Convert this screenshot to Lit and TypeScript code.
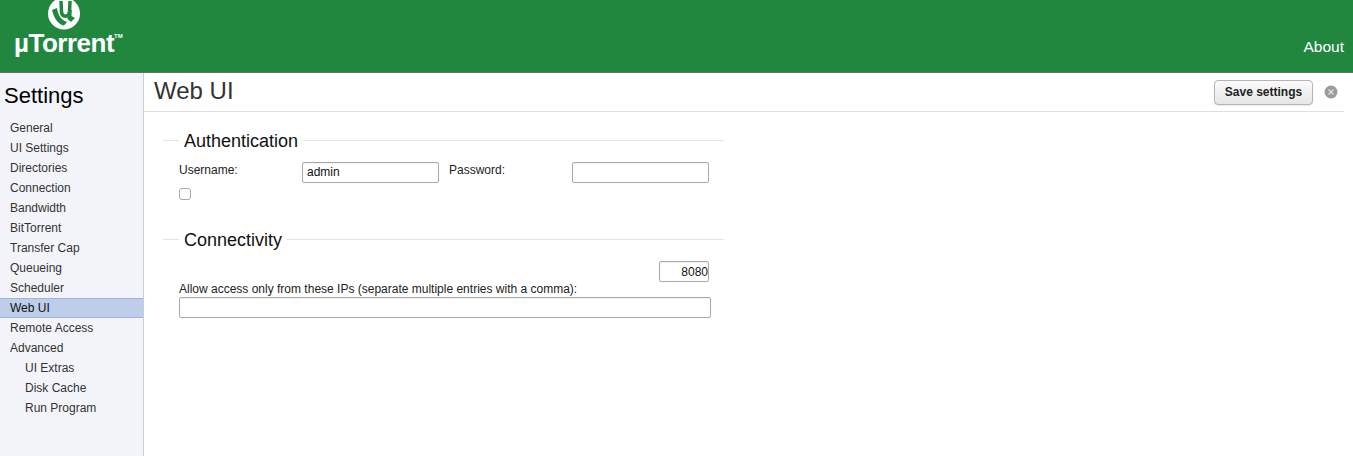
import { LitElement, html, css, svg } from "lit";
import { customElement } from "lit/decorators.js";

const NAV = [
  ["General", 0], ["UI Settings", 0], ["Directories", 0], ["Connection", 0],
  ["Bandwidth", 0], ["BitTorrent", 0], ["Transfer Cap", 0], ["Queueing", 0],
  ["Scheduler", 0], ["Web UI", 0], ["Remote Access", 0], ["Advanced", 0],
  ["UI Extras", 1], ["Disk Cache", 1], ["Run Program", 1],
] as const;

// white disc with the green u and swoosh on it, top clipped by the header
const logoMark = svg`
  <svg class="mark" width="34" height="32" viewBox="0 0 34 32">
    <circle cx="17" cy="15.500" r="16" fill="#fff"/>
    <path d="M5 12 L10 10 C11 17 14 22 20 24 L17 27.500 C11 26.500 7 20 5 12 Z" fill="#21873f"/>
    <path d="M14 3 L14.500 14 C15 19.500 21.500 19.500 22.500 14 L23 3" fill="none" stroke="#21873f" stroke-width="3.500"/>
    <path d="M21 12 L24.800 12 L24.500 18 L28 20 L24 24 L20.500 21 Z" fill="#21873f"/>
  </svg>`;

@customElement("app-root")
export class AppRoot extends LitElement {
  static styles = css`
    :host {
      display: block;
      height: 456px;
      overflow: hidden;
      background: #fff;
      font-family: "Liberation Sans", Arial, sans-serif;
      font-size: 12px;
      color: #222;
    }
    .top {
      height: 72px;
      background: #21873f;
      border-bottom: 1px solid #6b6b6b;
      display: flex;
      justify-content: space-between;
      overflow: hidden;
    }
    .logo {
      margin-left: 14px;
      width: 112px;
      display: flex;
      flex-direction: column;
      color: #fff;
    }
    .mark { margin: -2px 0 0 33px; display: block; flex: none; }
    .word {
      font-size: 26px;
      font-weight: bold;
      line-height: 26px;
      letter-spacing: -0.5px;
      white-space: nowrap;
    }
    .word sup { font-size: 6px; vertical-align: 14px; line-height: 0; letter-spacing: 0; }
    .about {
      color: #fff;
      font-size: 15.500px;
      align-self: flex-end;
      margin: 0 9px 16px 0;
    }
    .body { display: flex; height: 383px; }
    .side {
      width: 143px;
      flex: none;
      background: #f3f4fa;
      border-right: 1px solid #c9cdd8;
    }
    .side h2 {
      margin: 0;
      padding: 8px 0 0 4px;
      height: 37px;
      box-sizing: border-box;
      font-size: 22px;
      line-height: 29px;
      font-weight: normal;
      color: #000;
    }
    .side ul { list-style: none; margin: 8px 0 0; padding: 0; }
    .side li {
      height: 20px;
      line-height: 20px;
      padding-left: 10px;
      box-sizing: border-box;
      color: #333;
    }
    .side li.sub { padding-left: 25px; }
    .side li.on {
      background: #bdcdea;
      border-top: 1px solid #9fb4da;
      border-bottom: 1px solid #9fb4da;
      line-height: 18px;
      color: #111;
    }
    .main { flex: 1; min-width: 0; padding-right: 9px; }
    .head {
      height: 38px;
      border-bottom: 1px solid #e0e0e0;
      display: flex;
      align-items: center;
      padding: 0 6px 0 10px;
    }
    .head h1 {
      margin: 0 auto 0 0;
      font-size: 24px;
      line-height: 30px;
      font-weight: normal;
      color: #333;
      position: relative;
      top: -1px;
    }
    .save {
      width: 99px;
      height: 25px;
      border: 1px solid #b4b4b4;
      border-radius: 4px;
      background: linear-gradient(#fbfbfb, #e6e6e6);
      font: bold 12px "Liberation Sans", Arial, sans-serif;
      color: #222;
      padding: 0;
      margin-right: 11px;
      box-shadow: 0 1px 1px rgba(0, 0, 0, 0.08);
    }
    .close { display: block; flex: none; }
    fieldset {
      width: 561px;
      box-sizing: border-box;
      margin: 0 0 0 19px;
      border: 0;
      border-top: 1px solid #e3e3e3;
      padding: 0 15px 0 16px;
      min-width: 0;
    }
    legend {
      margin-left: 0;
      padding: 2px 5px 0;
      font-size: 18px;
      line-height: 21px;
      color: #111;
    }
    .auth { margin-top: 17px; }
    .conn { margin-top: 28px; }
    .creds {
      display: grid;
      grid-template-columns: 123px 137px 133px 137px;
      margin-top: 10px;
    }
    label { color: #222; line-height: 14px; }
    .creds label { padding-top: 1px; }
    .creds label.second { padding-left: 10px; }
    input[type="text"] {
      display: block;
      box-sizing: border-box;
      height: 21px;
      margin: 0;
      border: 1px solid #a9a9a9;
      border-radius: 2px;
      background: #fff;
      padding: 1px 4px;
      font: 12px "Liberation Sans", Arial, sans-serif;
      color: #111;
      box-shadow: inset 0 1px 1px rgba(0, 0, 0, 0.06);
      outline: 0;
    }
    .creds input { width: 137px; padding: 0 4px 2px; }
    .check {
      display: block;
      width: 12px;
      height: 12px;
      margin-top: 5px;
      box-sizing: border-box;
      border: 1px solid #a9a9a9;
      border-radius: 3px;
      background: #fff;
    }
    .port { display: flex; justify-content: flex-end; margin-top: 10px; width: 530px; }
    .port input { width: 50px; text-align: right; padding-right: 0; }
    .conn label { display: block; }
    .ips { width: 532px; margin-top: 1px !important; }
  `;

  render() {
    return html`
      <header class="top">
        <div class="logo">
          ${logoMark}
          <div class="word">µTorrent<sup>TM</sup></div>
        </div>
        <div class="about">About</div>
      </header>
      <div class="body">
        <nav class="side">
          <h2>Settings</h2>
          <ul>
            ${NAV.map(
              ([name, sub]) => html`<li class="${sub ? "sub" : ""} ${name === "Web UI" ? "on" : ""}">${name}</li>`
            )}
          </ul>
        </nav>
        <main class="main">
          <div class="head">
            <h1>Web UI</h1>
            <button class="save">Save settings</button>
            <svg class="close" width="14" height="14" viewBox="0 0 14 14">
              <circle cx="7" cy="7" r="6.500" fill="#9b9b9b"/>
              <path d="M4.500 4.500 L9.500 9.500 M9.500 4.500 L4.500 9.500" stroke="#e4e4e4" stroke-width="1.200"/>
            </svg>
          </div>
          <fieldset class="auth">
            <legend>Authentication</legend>
            <div class="creds">
              <label>Username:</label>
              <input type="text" value="admin" />
              <label class="second">Password:</label>
              <input type="text" />
            </div>
            <span class="check"></span>
          </fieldset>
          <fieldset class="conn">
            <legend>Connectivity</legend>
            <div class="port"><input type="text" value="8080" /></div>
            <label>Allow access only from these IPs (separate multiple entries with a comma):</label>
            <input class="ips" type="text" />
          </fieldset>
        </main>
      </div>
    `;
  }
}
